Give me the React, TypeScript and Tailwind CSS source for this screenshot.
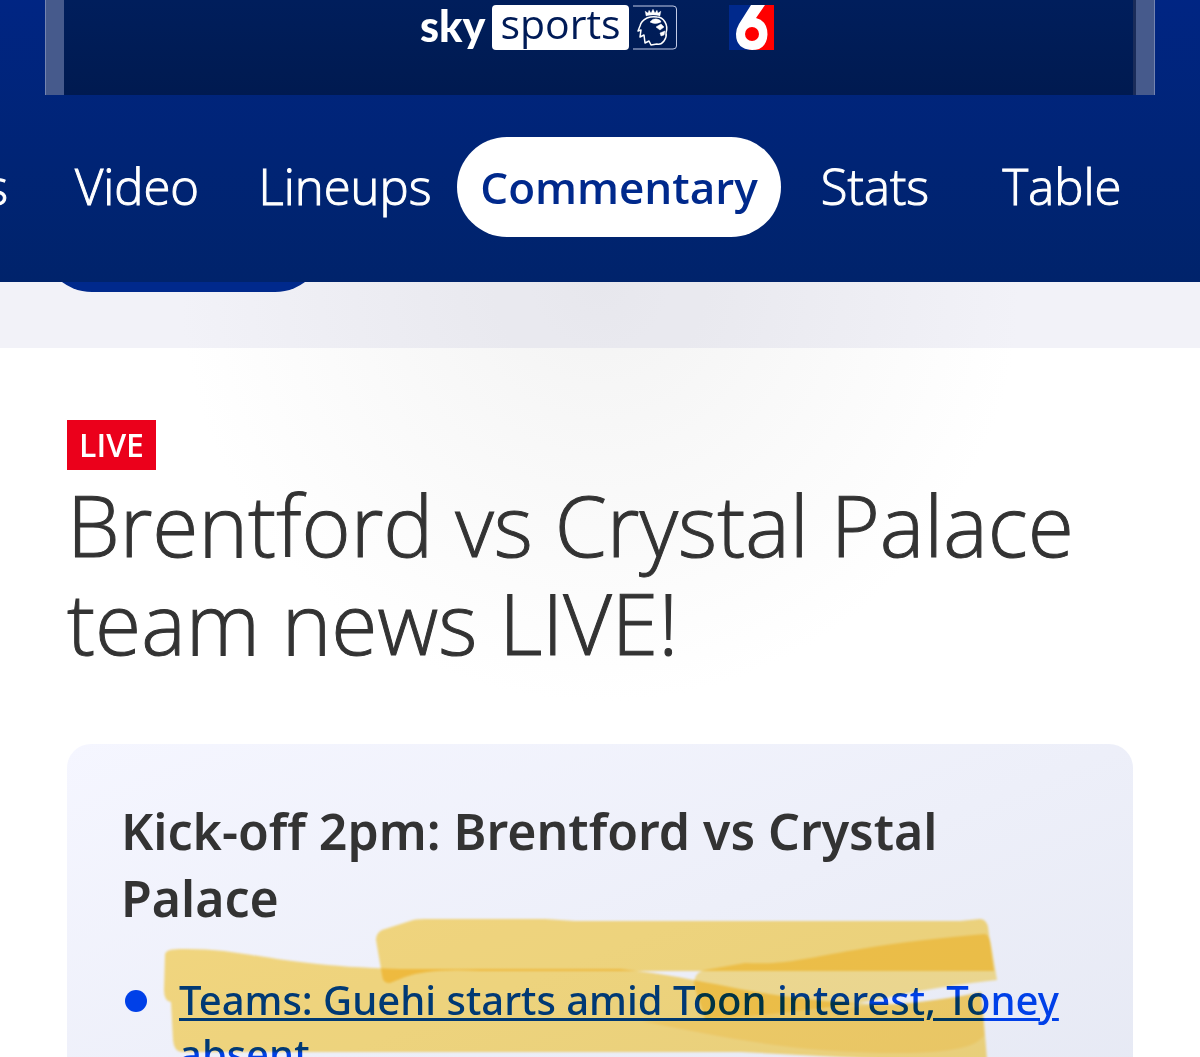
import type { ReactNode } from "react";

function Tab({ children, className }: { children: ReactNode; className: string }) {
  return (
    <a href="#" className={`flex h-[100px] shrink-0 items-center ${className}`}>
      {children}
    </a>
  );
}

function SkySportsLogo() {
  return (
    <div className="flex h-[45px] items-center">
      <span className="w-[72px] pb-1 font-[Lato] text-[43px] leading-[40px] font-black">sky</span>
      <span className="flex h-[45px] w-[137px] items-center justify-center rounded bg-white pb-2 text-[41px] leading-[41px] text-[#001b57]">
        sports
      </span>
      <svg className="h-[45px] w-[49px]" viewBox="0 0 49 45" fill="none" stroke="#fff" aria-label="Premier League">
        <path d="M4 1H44Q47.500 1 47.500 4V41Q47.500 44 44 44H4" stroke="#c3cbe6" />
        <g strokeWidth="1.500" strokeLinejoin="round">
          <path d="M17 11l-1-5 3 2 1-3 2 3 2-4 2 4 2-3 1 3 3-2-1 5q-7-2-14 0z" fill="#fff" strokeWidth=".2" />
          <path d="M18 13q-6 3-7 8l-2 5 3-1-1 7 4-2 1 8 4-2 2 4 6-1q4 1 7-3 3-4 2-8 2-6-1-11-3-5-8-5-5-1-10 1z" />
          <path d="M21 17q3-4 7-3 4 1 4 3-6 3-11 0zm6 5l5-3 3 3-4 3zm4 6l5-2-1 4-3 1z" fill="#fff" strokeWidth=".5" />
        </g>
      </svg>
    </div>
  );
}

function ChannelSix() {
  return (
    <svg className="h-[45px] w-[45px]" viewBox="0 0 45 45" aria-label="6">
      <path d="M0 0H45V45H0z" fill="#00298c" />
      <path d="M28 0H45V45H20z" fill="#f00" />
      <path d="M22 0H36L27 13Q38.500 16 38.500 29.500 37.500 45 23 45 7 44 7 29 7 24 10 19z" fill="#fff" />
      <circle cx="23" cy="29" r="7" fill="#f00" />
    </svg>
  );
}

// marker strokes drawn over the first headline
function Highlighter() {
  return (
    <svg
      className="pointer-events-none absolute -top-[63px] left-[39px] h-[150px] w-[850px] mix-blend-multiply blur-[1px]"
      viewBox="160 910 850 150"
      fill="#ffe180"
      aria-hidden="true"
    >
      <path className="mix-blend-multiply" d="M376 940Q376 933 382 930L410 921Q414 919 425 919H545L575 921H960L980 919Q986 919 988 927L994 971H480Q430 968 405 977L390 983Q383 984 382 975z" />
      <path className="mix-blend-multiply" d="M165 955Q165 949 180 949C250 948 270 966 400 969H620C690 976 740 992 800 998Q850 1005 900 1004 950 999 981 992L984 1022 987 1060H900L740 1052H182Q174 1052 173 1040L171 1002Q164 1001 164 990z" />
      <path className="mix-blend-multiply" fill="#ffe794" d="M694 985Q694 972 705 970L745 963C810 966 820 948 985 934Q990 935 992 950L997 980Q940 986 890 997C840 1008 780 1014 705 1019 697 1019 694 985z" />
      <path className="mix-blend-multiply" fill="#fff4d2" d="M640 1021C720 1036 790 1053 900 1053Q975 1053 984 1035L981 992Q950 999 900 1004L870 1006 705 1019z" />
    </svg>
  );
}

function App() {
  return (
    <div className="h-screen overflow-hidden bg-white font-['Open_Sans','Noto_Sans',sans-serif] text-[#333]">
      <header className="h-[282px] bg-linear-to-b from-[#002583] to-[#00236b] text-white">
        <div className="mx-[45px] flex h-[95px] border-x border-[#7484b0] bg-[#465a8c] px-[18px]">
          <div className="flex grow justify-center gap-[51px] border-r-3 border-[#1a2c5a] bg-linear-to-b from-[#001e5c] to-[#001a50] pt-[5px] pr-[3px]">
            <SkySportsLogo />
            <ChannelSix />
          </div>
        </div>
        <nav className="mt-[42px] flex overflow-hidden text-[49px] font-light [-webkit-text-stroke:1px]">
          <Tab className="w-[41px] justify-end pr-[33px]">s</Tab>
          <Tab className="w-[192px] justify-center">Video</Tab>
          <Tab className="w-[224px] justify-center">Lineups</Tab>
          <Tab className="w-[324px] justify-center rounded-full bg-white text-[44px] font-semibold text-[#00298c] [-webkit-text-stroke:0]">
            Commentary
          </Tab>
          <Tab className="w-[188px] justify-center">Stats</Tab>
          <Tab className="w-[186px] justify-center">Table</Tab>
        </nav>
      </header>

      <main className="bg-[radial-gradient(420px_circle_at_50%_0,#f3f3f3,#fff)]">
        <div className="h-[66px] overflow-hidden bg-[#000080]/5">
          <div className="-mt-[90px] ml-[42px] h-[100px] w-[283px] rounded-full bg-[#00298c]" />
        </div>
        <section className="px-[67px] pt-[72px]">
          <span className="flex h-[50px] w-[89px] items-center justify-center bg-[#eb001b] text-[32px] font-semibold text-white">
            LIVE
          </span>
          <h1 className="mt-[6px] text-[84px] leading-[98px] font-light [-webkit-text-stroke:1px]">
            Brentford vs Crystal Palace team news LIVE!
          </h1>
          <article className="mt-[72px] rounded-[24px] bg-linear-to-br from-[#f5f6ff] to-[#e5e8f3] px-[54px] pt-[54px] pb-[80px] font-['Noto_Sans',sans-serif]">
            <h2 className="text-[50px] leading-[67px] font-semibold">Kick-off 2pm: Brentford vs Crystal Palace</h2>
            <ul className="relative mt-[41px]">
              <li className="flex gap-8 pl-1 text-[40px] leading-[54px] font-medium text-[#0040e8]">
                <span className="mt-[17px] size-[22px] shrink-0 rounded-full bg-[#0040e8]" />
                <a href="#" className="underline decoration-3 underline-offset-3">
                  Teams: Guehi starts amid Toon interest, Toney absent
                </a>
              </li>
              <Highlighter />
            </ul>
          </article>
        </section>
      </main>
    </div>
  );
}

export default App;
